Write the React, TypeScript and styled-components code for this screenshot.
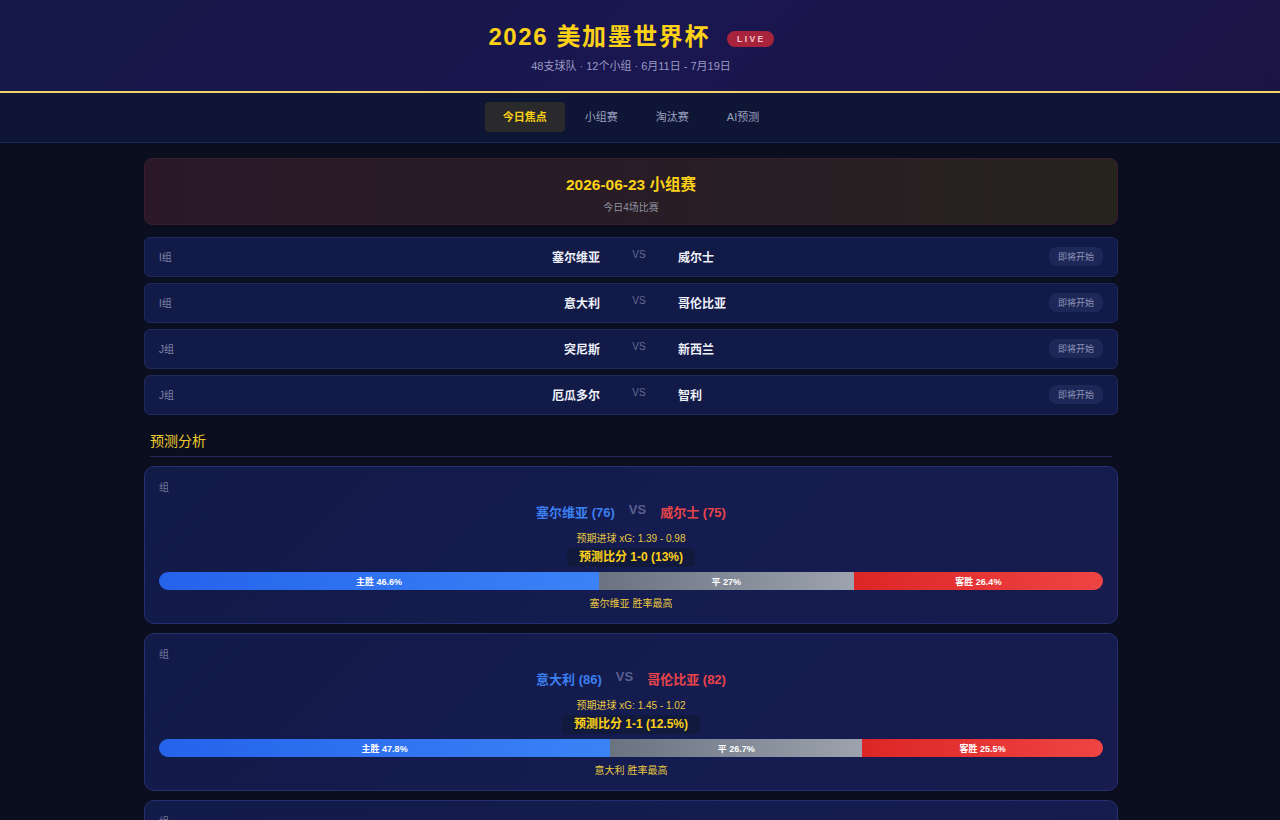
import React from 'react';
import styled, { createGlobalStyle } from 'styled-components';

const GlobalStyle = createGlobalStyle`
    html, body {
        margin: 0;
        padding: 0;
        background: #0a0e1f;
    }
    body {
        font-family: "Liberation Sans", Arial, "Noto Sans CJK SC", sans-serif;
        color: #e5e7eb;
    }
`

const GUTTER = 18;

const Page = styled.div`
    min-height: 820px;
    background: #0a0e1f;
`
const Header = styled.header`
    display: flex;
    flex-direction: column;
    align-items: center;
    height: 93px;
    box-sizing: border-box;
    padding-top: 22px;
    padding-right: ${GUTTER}px;
    background: linear-gradient(135deg, #161848 0%, #1a1650 50%, #1c1444 100%);
    border-bottom: 2px solid #f2d46a;
`
const TitleRow = styled.div`
    display: flex;
    flex-direction: row;
    align-items: center;
    gap: 17px;
`
const Title = styled.h1`
    margin: 0;
    color: #fcd116;
    font-size: 24px;
    font-weight: 700;
    letter-spacing: 1.6px;
    line-height: 30px;
`
const LiveBadge = styled.span`
    background: #a8243c;
    color: #f3c6cc;
    font-size: 8.5px;
    font-weight: 700;
    letter-spacing: 2.4px;
    padding: 3px 8px 3px 10px;
    border-radius: 8px;
    margin-top: 4px;
`
const SubTitle = styled.div`
    margin-top: 5px;
    color: #9a9cc4;
    font-size: 11px;
`
const Nav = styled.nav`
    display: flex;
    flex-direction: row;
    justify-content: center;
    gap: 2px;
    height: 50px;
    box-sizing: border-box;
    padding-top: 9px;
    padding-right: ${GUTTER}px;
    background: #0e1535;
    border-bottom: 1px solid #1f2b5c;
`
const Tab = styled.div<{ $active?: boolean }>`
    height: 30px;
    line-height: 30px;
    padding: 0 18px;
    border-radius: 4px;
    font-size: 11px;
    font-weight: ${p => p.$active ? 700 : 400};
    color: ${p => p.$active ? '#fcd116' : '#9aa0bf'};
    background: ${p => p.$active ? '#2a2a2c' : 'transparent'};
    cursor: pointer;
`
const Content = styled.div`
    padding-right: ${GUTTER}px;
`
const Main = styled.main`
    width: 974px;
    margin: 0 auto;
    padding-top: 15px;
    display: flex;
    flex-direction: column;
`
const DateBanner = styled.div`
    display: flex;
    flex-direction: column;
    align-items: center;
    height: 67px;
    box-sizing: border-box;
    padding-top: 16px;
    border-radius: 8px;
    border: 1px solid #3a1e2e;
    background: linear-gradient(90deg, #2a1828 0%, #281c26 50%, #26241f 100%);
`
const DateTitle = styled.div`
    color: #fcd116;
    font-size: 15.5px;
    font-weight: 700;
    line-height: 20px;
`
const DateSub = styled.div`
    margin-top: 4px;
    color: #8d8f9e;
    font-size: 10px;
`
const MatchList = styled.div`
    display: flex;
    flex-direction: column;
    gap: 6px;
    margin-top: 12px;
`
const MatchRow = styled.div`
    display: grid;
    grid-template-columns: 80px 1fr 78px 1fr 64px;
    align-items: center;
    height: 40px;
    box-sizing: border-box;
    padding: 0 14px 1px;
    border-radius: 6px;
    border: 1px solid #1f2a5c;
    background: #121a48;
`
const GroupLabel = styled.span`
    color: #7e84a8;
    font-size: 10px;
`
const TeamName = styled.span<{ $align: 'left' | 'right' }>`
    text-align: ${p => p.$align};
    color: #eef0f8;
    font-size: 12px;
    font-weight: 700;
`
const Vs = styled.span`
    text-align: center;
    color: #646a90;
    font-size: 10px;
    margin-top: -5px;
`
const StatusPill = styled.span`
    justify-self: end;
    background: #1e2858;
    color: #8d93b6;
    font-size: 9px;
    padding: 3px 9px;
    border-radius: 8px;
`
const SectionTitle = styled.h2`
    margin: 15px 6px 0;
    padding-bottom: 6px;
    color: #f0cd2c;
    font-size: 14px;
    font-weight: 400;
    border-bottom: 1px solid #232b5e;
`
const PredictionList = styled.div`
    display: flex;
    flex-direction: column;
    gap: 9px;
    margin-top: 9px;
`
const PredictionCard = styled.div`
    display: flex;
    flex-direction: column;
    align-items: center;
    height: 158px;
    box-sizing: border-box;
    padding: 14px 14px 0;
    border-radius: 10px;
    border: 1px solid #263070;
    background: linear-gradient(135deg, #121a48 0%, #151c50 60%, #171b4e 100%);
`
const CardGroup = styled.div`
    align-self: flex-start;
    color: #6e749a;
    font-size: 10px;
    line-height: 14px;
`
const Teams = styled.div`
    display: flex;
    flex-direction: row;
    align-items: center;
    gap: 14px;
    margin-top: 7px;
    font-size: 13px;
    font-weight: 700;
`
const Team = styled.span<{ $side: 'home' | 'away' }>`
    color: ${p => p.$side === 'home' ? '#3b7ff0' : '#e8454a'};
`
const CardVs = styled.span`
    color: #5a6090;
    margin-top: -4px;
`
const XgLine = styled.div`
    margin-top: 11px;
    color: #e8c840;
    font-size: 10px;
    line-height: 14px;
`
const ScoreTip = styled.div`
    margin-top: 2px;
    padding: 2px 12px;
    border-radius: 4px;
    background: #111a3c;
    color: #fcd116;
    font-size: 12px;
    font-weight: 700;
    line-height: 15px;
`
const ProbBar = styled.div`
    display: flex;
    flex-direction: row;
    align-self: stretch;
    height: 18px;
    margin-top: 5px;
    border-radius: 9px;
    overflow: hidden;
`
const ProbSegment = styled.div<{ $kind: 'home' | 'draw' | 'away' }>`
    display: flex;
    align-items: center;
    justify-content: center;
    color: #ffffff;
    font-size: 9px;
    font-weight: 700;
    background: ${p => p.$kind === 'home'
        ? 'linear-gradient(90deg, #2563eb, #3b82f6)'
        : p.$kind === 'draw'
            ? 'linear-gradient(90deg, #6b7280, #9ca3af)'
            : 'linear-gradient(90deg, #dc2626, #ef4444)'};
`
const Verdict = styled.div`
    margin-top: 5px;
    color: #e8c840;
    font-size: 10px;
`

type Match = {
    group: string,
    home: string,
    away: string,
}

type Prediction = {
    home: string,
    away: string,
    homeRating: number,
    awayRating: number,
    xg: string,
    score: string,
    homeWin: number,
    draw: number,
    awayWin: number,
}

const matches: Match[] = [
    { group: 'I组', home: '塞尔维亚', away: '威尔士' },
    { group: 'I组', home: '意大利', away: '哥伦比亚' },
    { group: 'J组', home: '突尼斯', away: '新西兰' },
    { group: 'J组', home: '厄瓜多尔', away: '智利' },
]

const predictions: Prediction[] = [
    { home: '塞尔维亚', away: '威尔士', homeRating: 76, awayRating: 75, xg: '1.39 - 0.98', score: '1-0 (13%)', homeWin: 46.6, draw: 27, awayWin: 26.4 },
    { home: '意大利', away: '哥伦比亚', homeRating: 86, awayRating: 82, xg: '1.45 - 1.02', score: '1-1 (12.5%)', homeWin: 47.8, draw: 26.7, awayWin: 25.5 },
    { home: '突尼斯', away: '新西兰', homeRating: 70, awayRating: 66, xg: '1.30 - 1.05', score: '1-0 (12%)', homeWin: 44.1, draw: 28.3, awayWin: 27.6 },
]

const tabs = ['今日焦点', '小组赛', '淘汰赛', 'AI预测']

export default function App() {
    return (
        <Page>
            <GlobalStyle />
            <Header>
                <TitleRow>
                    <Title>2026 美加墨世界杯</Title>
                    <LiveBadge>LIVE</LiveBadge>
                </TitleRow>
                <SubTitle>48支球队 · 12个小组 · 6月11日 - 7月19日</SubTitle>
            </Header>
            <Nav>
                {tabs.map((t, i) => <Tab key={t} $active={i === 0}>{t}</Tab>)}
            </Nav>
            <Content>
                <Main>
                    <DateBanner>
                        <DateTitle>2026-06-23 小组赛</DateTitle>
                        <DateSub>今日4场比赛</DateSub>
                    </DateBanner>
                    <MatchList>
                        {matches.map(m => (
                            <MatchRow key={m.home}>
                                <GroupLabel>{m.group}</GroupLabel>
                                <TeamName $align="right">{m.home}</TeamName>
                                <Vs>VS</Vs>
                                <TeamName $align="left">{m.away}</TeamName>
                                <StatusPill>即将开始</StatusPill>
                            </MatchRow>
                        ))}
                    </MatchList>
                    <SectionTitle>预测分析</SectionTitle>
                    <PredictionList>
                        {predictions.map(p => (
                            <PredictionCard key={p.home}>
                                <CardGroup>组</CardGroup>
                                <Teams>
                                    <Team $side="home">{p.home} ({p.homeRating})</Team>
                                    <CardVs>VS</CardVs>
                                    <Team $side="away">{p.away} ({p.awayRating})</Team>
                                </Teams>
                                <XgLine>预期进球 xG: {p.xg}</XgLine>
                                <ScoreTip>预测比分 {p.score}</ScoreTip>
                                <ProbBar>
                                    <ProbSegment $kind="home" style={{ width: `${p.homeWin}%` }}>主胜 {p.homeWin}%</ProbSegment>
                                    <ProbSegment $kind="draw" style={{ width: `${p.draw}%` }}>平 {p.draw}%</ProbSegment>
                                    <ProbSegment $kind="away" style={{ width: `${p.awayWin}%` }}>客胜 {p.awayWin}%</ProbSegment>
                                </ProbBar>
                                <Verdict>{p.home} 胜率最高</Verdict>
                            </PredictionCard>
                        ))}
                    </PredictionList>
                </Main>
            </Content>
        </Page>
    );
}
